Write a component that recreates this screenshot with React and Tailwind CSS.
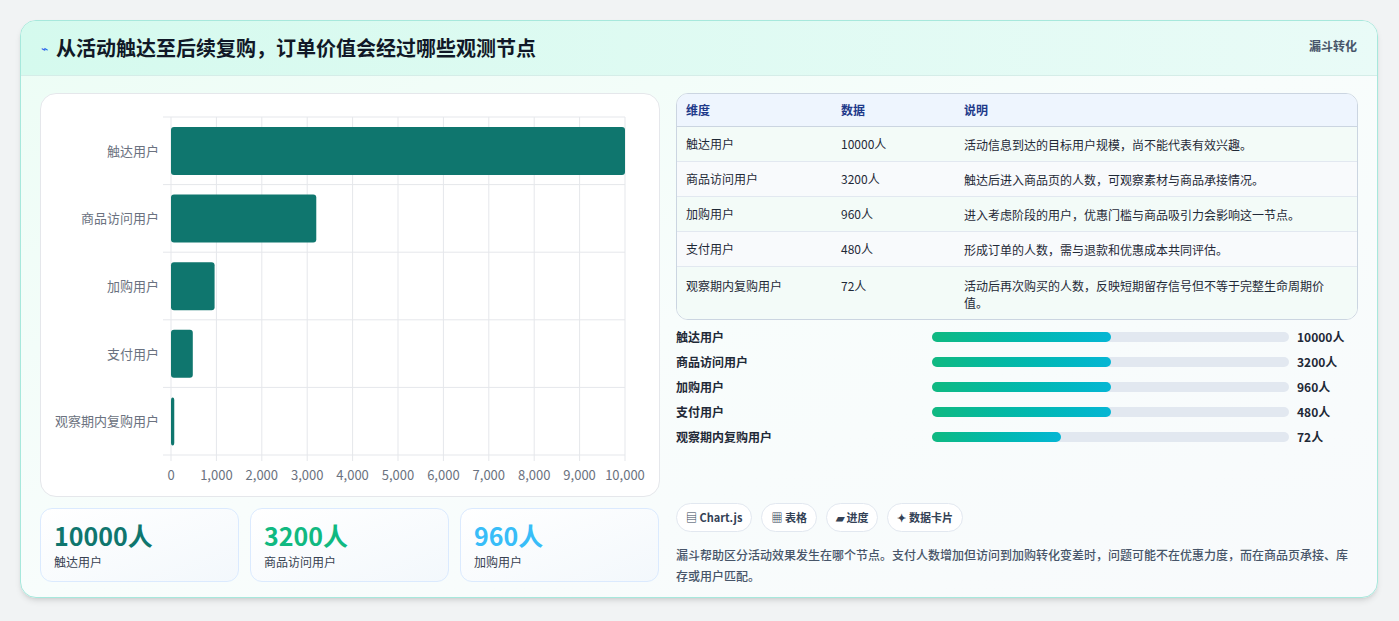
const F = { fontFamily: '"Noto Sans CJK SC","Noto Sans",sans-serif' };
const rows = [
  ["触达用户", "10000人", "活动信息到达的目标用户规模，尚不能代表有效兴趣。", 10000, 50],
  ["商品访问用户", "3200人", "触达后进入商品页的人数，可观察素材与商品承接情况。", 3200, 50],
  ["加购用户", "960人", "进入考虑阶段的用户，优惠门槛与商品吸引力会影响这一节点。", 960, 50],
  ["支付用户", "480人", "形成订单的人数，需与退款和优惠成本共同评估。", 480, 50],
  ["观察期内复购用户", "72人", "活动后再次购买的人数，反映短期留存信号但不等于完整生命周期价值。", 72, 36],
];
const ticks = ["0","1,000","2,000","3,000","4,000","5,000","6,000","7,000","8,000","9,000","10,000"];

function Chart() {
  const L = 130, T = 23, W = 454, H = 338, rh = H / 5;
  return (
    <svg width="619" height="403" className="block">
      {ticks.map((t, i) => {
        const x = L + (W * i) / 10;
        return (
          <g key={i}>
            <line x1={x} y1={T} x2={x} y2={T + H + 6} stroke="#e5e7eb" />
            <text x={x} y={T + H + 25} textAnchor="middle" fontSize="13" fill="#6b7280" style={F}>{t}</text>
          </g>
        );
      })}
      {[0,1,2,3,4,5].map(i => <line key={i} x1={L - 8} x2={L + W} y1={T + rh * i} y2={T + rh * i} stroke="#e5e7eb" />)}
      {rows.map((r, i) => {
        const y = T + rh * i;
        return (
          <g key={i}>
            <rect x={L} y={y + 10} width={Math.max(3, (W * r[3]) / 10000)} height={48} rx="3" fill="#0f766e" />
            <text x={L - 12} y={y + rh / 2 + 5} textAnchor="end" fontSize="13" fill="#6b7280" style={F}>{r[0]}</text>
          </g>
        );
      })}
    </svg>
  );
}

export default function App() {
  return (
    <div className="w-[1399px] h-[621px] bg-[#f1f3f4] pt-[20px] pl-[20px]" style={F}>
      <div className="w-[1358px] h-[578px] rounded-2xl border border-[#a7e8dc] bg-gradient-to-br from-[#ecfdf5] via-[#f8fdfc] to-[#f8fafc] overflow-hidden shadow-md">
        <div className="h-[55px] flex items-center justify-between px-[20px] bg-gradient-to-r from-[#d5faee] to-[#e9fbf7] border-b border-[#d5ede8]">
          <div className="flex items-center gap-2">
            <span className="text-[#2563eb] text-[12px]">⌁</span>
            <span className="text-[20px] font-bold text-[#111827]">从活动触达至后续复购，订单价值会经过哪些观测节点</span>
          </div>
          <span className="text-[12px] font-bold text-[#475569] self-start mt-[16px]">漏斗转化</span>
        </div>
        <div className="flex gap-[16px] px-[19px] pt-[17px]">
          <div className="w-[620px]">
            <div className="h-[404px] rounded-2xl bg-white border border-[#e5e7eb]"><Chart /></div>
            <div className="flex gap-[11px] mt-[11px]">
              {[["10000人","text-[#0f766e]","触达用户"],["3200人","text-[#10b981]","商品访问用户"],["960人","text-[#38bdf8]","加购用户"]].map(c => (
                <div key={c[2]} className="w-[199px] h-[74px] rounded-xl border border-[#dbeafe] bg-gradient-to-br from-white to-[#f3f8fc] px-[13px] pt-[10px]">
                  <div className={`text-[25px] font-bold leading-[32px] ${c[1]}`}>{c[0]}</div>
                  <div className="text-[12px] text-[#374151] mt-[2px]">{c[2]}</div>
                </div>
              ))}
            </div>
          </div>
          <div className="w-[685px]">
            <div className="rounded-xl border border-[#cbd5e1] bg-white overflow-hidden text-[12px] text-[#1f2937]">
              <div className="flex h-[33px] items-center bg-[#eef5fe] text-[#1e3a8a] font-bold border-b border-[#cbd5e1]">
                <div className="w-[164px] pl-[9px]">维度</div><div className="w-[123px]">数据</div><div>说明</div>
              </div>
              {rows.map((r, i) => (
                <div key={i} className={`flex ${i === 4 ? "h-[52px] pt-[10px]" : "h-[35px] items-center"} ${i % 2 ? "bg-[#f8fafc]" : "bg-[#f3fbf8]"} ${i < 4 ? "border-b border-[#e2e8f0]" : ""}`}>
                  <div className="w-[164px] pl-[9px]">{r[0]}</div><div className="w-[123px]">{r[1]}</div><div className="w-[380px] leading-[17px]">{r[2]}</div>
                </div>
              ))}
            </div>
            <div className="mt-[8px] flex flex-col gap-[7px] text-[12px] font-bold text-[#1f2937]">
              {rows.map((r, i) => (
                <div key={i} className="flex items-center h-[18px]">
                  <div className="w-[256px]">{r[0]}</div>
                  <div className="w-[357px] h-[10px] rounded-full bg-[#e2e8f0]">
                    <div className="h-full rounded-full bg-gradient-to-r from-[#10b981] to-[#06b6d4]" style={{ width: r[4] + "%" }} />
                  </div>
                  <div className="ml-[8px]">{r[1]}</div>
                </div>
              ))}
            </div>
            <div className="flex gap-[9px] mt-[57px] text-[11px] font-bold text-[#334155]">
              {["▤ Chart.js","▦ 表格","▰ 进度","✦ 数据卡片"].map(t => (
                <div key={t} className="h-[29px] px-[9px] flex items-center rounded-full border border-[#e2e8f0] bg-white">{t}</div>
              ))}
            </div>
            <p className="mt-[12px] text-[12px] leading-[21px] text-[#475569] font-medium">漏斗帮助区分活动效果发生在哪个节点。支付人数增加但访问到加购转化变差时，问题可能不在优惠力度，而在商品页承接、库存或用户匹配。</p>
          </div>
        </div>
      </div>
    </div>
  );
}
